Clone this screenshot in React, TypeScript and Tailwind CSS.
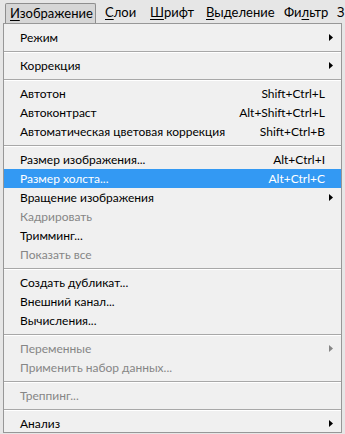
type Item =
  | { kind: "sep" }
  | { kind: "item"; label: string; shortcut?: string; sub?: boolean; disabled?: boolean; active?: boolean };

const items: Item[] = [
  { kind: "item", label: "Режим", sub: true },
  { kind: "sep" },
  { kind: "item", label: "Коррекция", sub: true },
  { kind: "sep" },
  { kind: "item", label: "Автотон", shortcut: "Shift+Ctrl+L" },
  { kind: "item", label: "Автоконтраст", shortcut: "Alt+Shift+Ctrl+L" },
  { kind: "item", label: "Автоматическая цветовая коррекция", shortcut: "Shift+Ctrl+B" },
  { kind: "sep" },
  { kind: "item", label: "Размер изображения...", shortcut: "Alt+Ctrl+I" },
  { kind: "item", label: "Размер холста...", shortcut: "Alt+Ctrl+C", active: true },
  { kind: "item", label: "Вращение изображения", sub: true },
  { kind: "item", label: "Кадрировать", disabled: true },
  { kind: "item", label: "Тримминг..." },
  { kind: "item", label: "Показать все", disabled: true },
  { kind: "sep" },
  { kind: "item", label: "Создать дубликат..." },
  { kind: "item", label: "Внешний канал..." },
  { kind: "item", label: "Вычисления..." },
  { kind: "sep" },
  { kind: "item", label: "Переменные", sub: true, disabled: true },
  { kind: "item", label: "Применить набор данных...", disabled: true },
  { kind: "sep" },
  { kind: "item", label: "Треппинг...", disabled: true },
  { kind: "sep" },
  { kind: "item", label: "Анализ", sub: true },
];

function Arrow({ color }: { color: string }) {
  return (
    <svg width="4" height="7" viewBox="0 0 4 7" className="shrink-0">
      <path d="M0 0 L4 3.5 L0 7 Z" fill={color} />
    </svg>
  );
}

function BarItem({ first, rest, className = "" }: { first: string; rest: string; className?: string }) {
  return (
    <span className={`shrink-0 ${className}`}>
      <span className="underline underline-offset-2">{first}</span>
      {rest}
    </span>
  );
}

export default function App() {
  return (
    <div
      className="w-[345px] h-[434px] overflow-hidden bg-[#e6e6e6] text-[12px] text-black"
      style={{ fontFamily: 'Lato, "Noto Sans", sans-serif' }}
    >
      {/* menu bar */}
      <div className="h-[23px] flex items-end pl-[5px] relative z-10 text-[13px] whitespace-nowrap">
        <div className="h-[20px] pl-[4px] flex items-center bg-[#d6d6d6] border border-b-0 border-[#8e8e8e] rounded-t-[2px] w-[91px] shrink-0">
          <BarItem first="И" rest="зображение" />
        </div>
        <div className="h-[20px] flex items-center">
          <BarItem first="С" rest="лои" className="ml-[9px] w-[45px]" />
          <BarItem first="Ш" rest="рифт" className="w-[56px]" />
          <BarItem first="В" rest="ыделение" className="w-[78px]" />
          <span className="w-[53px] shrink-0">
            Фи<span className="underline underline-offset-2">л</span>ьтр
          </span>
          <span className="shrink-0">З</span>
        </div>
      </div>

      {/* dropdown */}
      <div className="mx-[3px] border border-[#979797] bg-[#f0f0f0] pt-[4px] h-[410px]">
        {items.map((it, i) =>
          it.kind === "sep" ? (
            <div key={i} className="mt-[4px] mb-[3px] h-px bg-[#a8a8a8] border-b border-white box-content" />
          ) : (
            <div
              key={i}
              className={`h-[19px] flex items-center justify-between pl-[16px] pr-[8px] ${
                it.active ? "bg-[#3399f3] text-white" : it.disabled ? "text-[#868686]" : ""
              }`}
            >
              <span>{it.label}</span>
              {it.shortcut ? (
                <span className="pr-[8px]">{it.shortcut}</span>
              ) : it.sub ? (
                <Arrow color={it.disabled ? "#868686" : "#000"} />
              ) : null}
            </div>
          )
        )}
      </div>
    </div>
  );
}
